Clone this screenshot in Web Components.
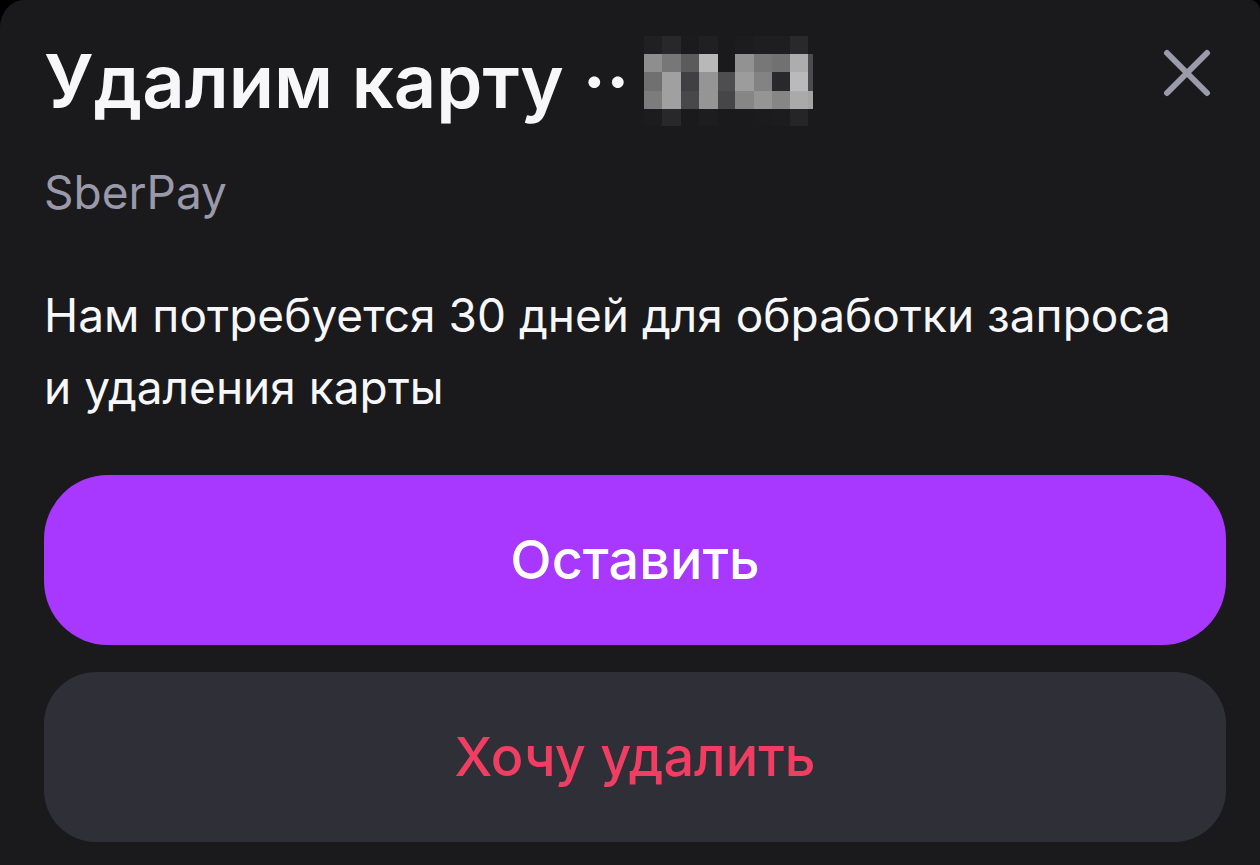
<!DOCTYPE html>
<html lang="ru">
<head>
<meta charset="utf-8">
<meta name="viewport" content="width=device-width, initial-scale=1">
<title>Удаление карты</title>
<style>
  html { background: #000; }
  body { margin: 0; font-family: Inter, "Noto Sans", sans-serif; color: #f7f7fa; }
</style>
</head>
<body>
<bottom-sheet>
  <sheet-header slot="header">
    <span>Удалим карту ··</span>
    <masked-digits slot="mask"></masked-digits>
    <span slot="subtitle">SberPay</span>
  </sheet-header>
  <sheet-text>Нам потребуется 30 дней для обработки запроса и&nbsp;удаления карты</sheet-text>
  <sheet-button slot="actions" variant="primary">Оставить</sheet-button>
  <sheet-button slot="actions" variant="danger">Хочу удалить</sheet-button>
</bottom-sheet>

<script>
class BaseElement extends HTMLElement {
  constructor() {
    super();
    this.attachShadow({ mode: 'open' }).innerHTML = this.constructor.markup;
  }
}

class BottomSheet extends BaseElement {
  static markup = `
    <style>
      :host { display: block; }
      main {
        box-sizing: border-box;
        min-height: 100vh;
        padding: 36px 34px 23px 44px;
        background: #1a1a1c;
        border-radius: 24px 10px 0 0 / 28px 10px 0 0;
      }
      .actions { display: flex; flex-direction: column; gap: 27px; margin-top: 52px; }
    </style>
    <main>
      <slot name="header"></slot>
      <slot></slot>
      <div class="actions"><slot name="actions"></slot></div>
    </main>`;
}

class SheetHeader extends BaseElement {
  static markup = `
    <style>
      :host { display: block; }
      header { display: flex; justify-content: space-between; align-items: flex-start; }
      h1 {
        display: flex; align-items: center; gap: 14px; margin: 0;
        font-size: 74px; line-height: 90px; font-weight: 600; white-space: nowrap;
      }
      p { margin: 34px 0 0; color: #9a99aa; font-size: 46px; line-height: 64px; }
    </style>
    <header>
      <h1><slot></slot><slot name="mask"></slot></h1>
      <close-button></close-button>
    </header>
    <p><slot name="subtitle"></slot></p>`;
}

class CloseButton extends BaseElement {
  static markup = `
    <style>
      :host { display: block; }
      button {
        display: grid; place-items: center; width: 78px; height: 74px;
        padding: 0; border: 0; background: none; color: #9c9bac; cursor: pointer;
      }
      svg { display: block; }
    </style>
    <button type="button" aria-label="Закрыть">
      <svg width="48" height="48" viewBox="0 0 48 48" fill="none" stroke="currentColor" stroke-width="6" stroke-linecap="round" aria-hidden="true">
        <path d="M4 4 44 44M44 4 4 44"/>
      </svg>
    </button>`;
}

class MaskedDigits extends BaseElement {
  static markup = `
    <style>:host { display: block; } svg { display: block; }</style>
    <svg width="170" height="90" viewBox="0 0 170 90" shape-rendering="crispEdges" role="img" aria-label="Номер скрыт"></svg>`;
  connectedCallback() {
    const xs = [0, 18, 37, 55, 74, 91, 110, 128, 146, 164, 169];
    const ys = [0, 18, 36, 55, 73, 90];
    const rows = [
      ['#202022', '#28282a', '#1b1b1d', '#202022', '#1a1a1c', '#1c1c1e', '#1e1e20', '#1e1e20', '#29292b', '#1a1a1c'],
      ['#8e8e8f', '#777778', '#5b5b5c', '#b8b8b9', '#1a1a1c', '#929293', '#777778', '#717172', '#adadae', '#4c4c4e'],
      ['#707071', '#a0a0a1', '#404042', '#959596', '#4e4e50', '#9c9c9d', '#838384', '#29292b', '#bababb', '#4c4c4e'],
      ['#7c7c7d', '#a0a0a1', '#48484a', '#959596', '#464648', '#868687', '#959596', '#868687', '#aaaaab', '#a4a4a5'],
      ['#1c1c1e', '#28282a', '#1a1a1c', '#1d1d1f', '#1a1a1c', '#1a1a1c', '#1b1b1d', '#1c1c1e', '#252527', '#1a1a1c'],
    ];
    this.shadowRoot.querySelector('svg').innerHTML = rows.map((row, r) => row.map((fill, c) =>
      `<rect x="${xs[c]}" y="${ys[r]}" width="${xs[c + 1] - xs[c]}" height="${ys[r + 1] - ys[r]}" fill="${fill}"/>`
    ).join('')).join('');
  }
}

class SheetText extends BaseElement {
  static markup = `
    <style>
      :host { display: block; margin-top: 55px; font-size: 46px; line-height: 72px; }
      p { margin: 0; }
    </style>
    <p><slot></slot></p>`;
}

class SheetButton extends BaseElement {
  static markup = `
    <style>
      :host { display: block; }
      button {
        display: block; width: 100%; padding: 53px 24px; border: 0; border-radius: 64px;
        background: #a838ff; color: #fff; font: inherit; font-size: 54px; line-height: 64px;
        font-weight: 500; cursor: pointer;
      }
      :host([variant="danger"]) button { background: #2f2f38; color: #f03e63; border-radius: 52px; }
    </style>
    <button type="button"><slot></slot></button>`;
}

customElements.define('bottom-sheet', BottomSheet);
customElements.define('sheet-header', SheetHeader);
customElements.define('close-button', CloseButton);
customElements.define('masked-digits', MaskedDigits);
customElements.define('sheet-text', SheetText);
customElements.define('sheet-button', SheetButton);
</script>
</body>
</html>
